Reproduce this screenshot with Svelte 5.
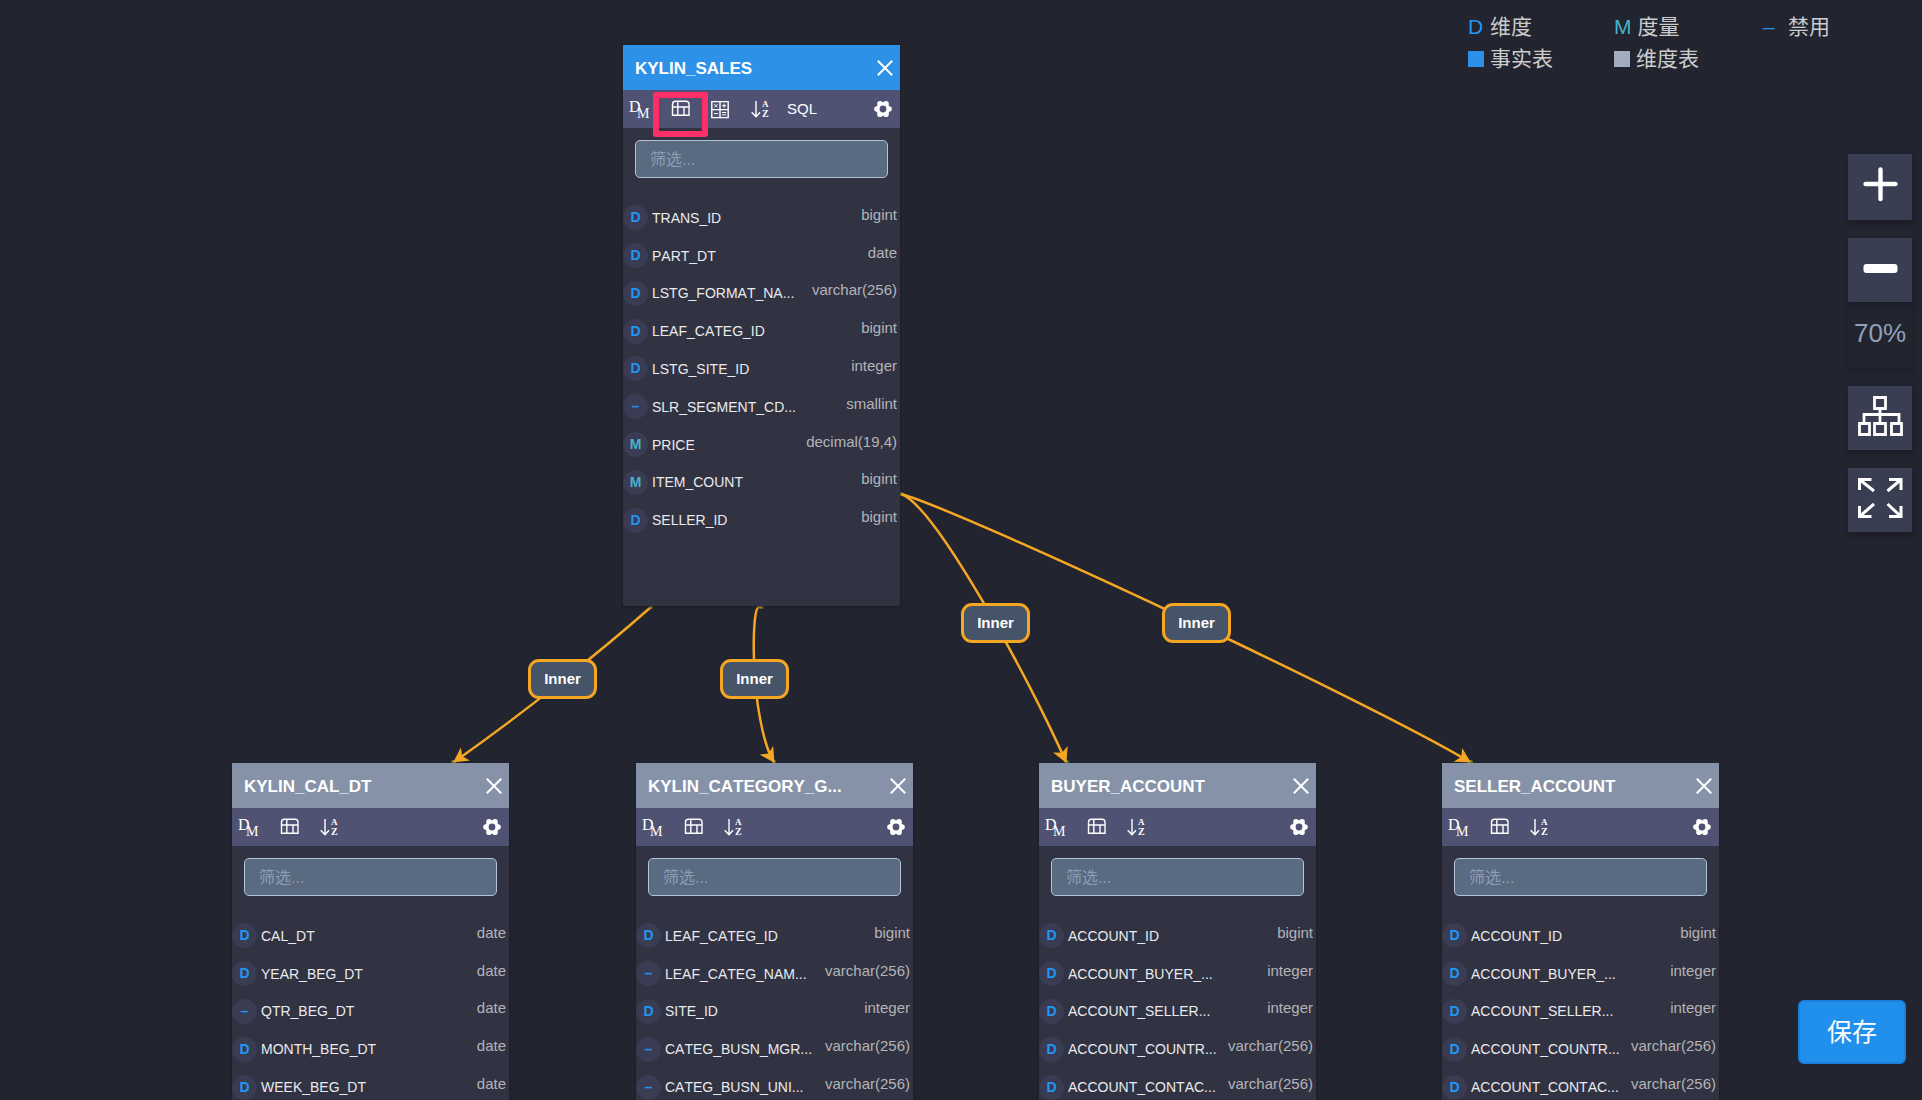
<script>
  const save = '保存';
  const legend = [
    { mark: 'D', kind: 'dimension', label: '维度' },
    { mark: 'M', kind: 'measure', label: '度量' },
    { mark: '–', kind: 'disabled', label: '禁用' },
    { mark: '', kind: 'fact', label: '事实表' },
    { mark: '', kind: 'lookup', label: '维度表' },
  ];

  const tables = [
    {
      id: 'sales', name: 'KYLIN_SALES', fact: true, x: 623, y: 45,
      columns: [
        ['D', 'TRANS_ID', 'bigint'],
        ['D', 'PART_DT', 'date'],
        ['D', 'LSTG_FORMAT_NA...', 'varchar(256)'],
        ['D', 'LEAF_CATEG_ID', 'bigint'],
        ['D', 'LSTG_SITE_ID', 'integer'],
        ['–', 'SLR_SEGMENT_CD...', 'smallint'],
        ['M', 'PRICE', 'decimal(19,4)'],
        ['M', 'ITEM_COUNT', 'bigint'],
        ['D', 'SELLER_ID', 'bigint'],
      ],
    },
    {
      id: 'cal', name: 'KYLIN_CAL_DT', fact: false, x: 232, y: 763,
      columns: [
        ['D', 'CAL_DT', 'date'],
        ['D', 'YEAR_BEG_DT', 'date'],
        ['–', 'QTR_BEG_DT', 'date'],
        ['D', 'MONTH_BEG_DT', 'date'],
        ['D', 'WEEK_BEG_DT', 'date'],
      ],
    },
    {
      id: 'category', name: 'KYLIN_CATEGORY_G...', fact: false, x: 636, y: 763,
      columns: [
        ['D', 'LEAF_CATEG_ID', 'bigint'],
        ['–', 'LEAF_CATEG_NAM...', 'varchar(256)'],
        ['D', 'SITE_ID', 'integer'],
        ['–', 'CATEG_BUSN_MGR...', 'varchar(256)'],
        ['–', 'CATEG_BUSN_UNI...', 'varchar(256)'],
      ],
    },
    {
      id: 'buyer', name: 'BUYER_ACCOUNT', fact: false, x: 1039, y: 763,
      columns: [
        ['D', 'ACCOUNT_ID', 'bigint'],
        ['D', 'ACCOUNT_BUYER_...', 'integer'],
        ['D', 'ACCOUNT_SELLER...', 'integer'],
        ['D', 'ACCOUNT_COUNTR...', 'varchar(256)'],
        ['D', 'ACCOUNT_CONTAC...', 'varchar(256)'],
      ],
    },
    {
      id: 'seller', name: 'SELLER_ACCOUNT', fact: false, x: 1442, y: 763,
      columns: [
        ['D', 'ACCOUNT_ID', 'bigint'],
        ['D', 'ACCOUNT_BUYER_...', 'integer'],
        ['D', 'ACCOUNT_SELLER...', 'integer'],
        ['D', 'ACCOUNT_COUNTR...', 'varchar(256)'],
        ['D', 'ACCOUNT_CONTAC...', 'varchar(256)'],
      ],
    },
  ];

  const joins = [
    { label: 'Inner', x: 528, y: 659, path: 'M651 607 C600 652 525 712 454 762' },
    { label: 'Inner', x: 720, y: 659, path: 'M762 607 H759 C755 607 753 630 754 660 C755 700 763 745 774 762' },
    { label: 'Inner', x: 961, y: 603, path: 'M901 494 C935 505 1030 680 1066 762' },
    { label: 'Inner', x: 1162, y: 603, path: 'M901 494 C960 510 1370 702 1470 762' },
  ];

  const ports = [
    [651, 607], [762, 607], [901, 494], [453, 762], [774, 762], [1067, 762], [1471, 762],
  ];

  // Centres of the six lobes of the gear icon.
  const lobes = [[16, 10], [13, 15.2], [7, 15.2], [4, 10], [7, 4.8], [13, 4.8]];

  const kinds = { D: 'dimension', M: 'measure', '–': 'disabled' };
</script>

<main class="canvas">
  <svg class="links" aria-hidden="true">
    <defs>
      <marker id="arrow" markerUnits="userSpaceOnUse" markerWidth="16" markerHeight="16" refX="14" refY="8" orient="auto">
        <path d="M0 0L15 8L0 16L4 8z" />
      </marker>
    </defs>
    {#each ports as [cx, cy]}
      <circle {cx} {cy} r="2" />
    {/each}
    {#each joins as join}
      <path class="link" d={join.path} marker-end="url(#arrow)" />
    {/each}
  </svg>

  {#each joins as join}
    <button class="join" style="left: {join.x}px; top: {join.y}px">{join.label}</button>
  {/each}

  {#each tables as table}
    <section class="card" class:fact={table.fact} style="left: {table.x}px; top: {table.y}px">
      <header>
        <h2>{table.name}</h2>
        <button class="close" aria-label="关闭">
          <svg width="16" height="16" viewBox="0 0 16 16" aria-hidden="true"><path d="M0.8 0.8L15.2 15.2M15.2 0.8L0.8 15.2" /></svg>
        </button>
      </header>
      <div class="tools">
        <button aria-label="维度度量">
          <svg width="26" height="28" viewBox="-3 -4 26 28" aria-hidden="true">
            <text x="-1" y="13" font-size="16">D</text>
            <text x="7" y="19" font-size="14">M</text>
          </svg>
        </button>
        <button class:marked={table.fact} aria-label="表">
          <svg width="20" height="20" viewBox="0 0 20 20" aria-hidden="true">
            <path d="M2.500 16.300V5.200a3 3 0 0 1 3-3h10.500a3 3 0 0 1 3 3v11.100zM2.500 8h16.500M7.800 2.200v14.100M14 8v8.300" />
          </svg>
        </button>
        {#if table.fact}
          <button aria-label="计算列">
            <svg width="20" height="20" viewBox="0 0 20 20" aria-hidden="true">
              <path d="M1.8 2.6h16.4v16H1.8zM10 2.6v16M1.8 10.6h16.4" />
              <path class="thin" d="M4.4 5.2l3 3M7.4 5.2l-3 3M14.1 4.6v4.2M12 6.7h4.2M4 14.6h4M12 13.5h4.2M12 15.8h4.2" />
            </svg>
          </button>
        {/if}
        <button aria-label="排序">
          <svg width="20" height="24" viewBox="0 -2 20 24" aria-hidden="true">
            <path d="M6 2v15.600M1.700 13.200l4.300 4.600 4-4.600" />
            <text class="strong" x="12" y="8" font-size="9">A</text>
            <text class="strong" x="12" y="18" font-size="10">Z</text>
          </svg>
        </button>
        {#if table.fact}<button class="sql">SQL</button>{/if}
        <button class="gear" aria-label="设置">
          <svg width="20" height="20" viewBox="0 0 20 20" aria-hidden="true">
            <circle cx="10" cy="10" r="6.800" />
            {#each lobes as [cx, cy]}
              <circle {cx} {cy} r="2.800" />
            {/each}
            <circle class="hole" cx="10" cy="10" r="3.400" />
          </svg>
        </button>
      </div>
      <input class="filter" type="text" placeholder="筛选..." aria-label="筛选 {table.name}" />
      <ul>
        {#each table.columns as [mark, name, type]}
          <li>
            <span class="badge {kinds[mark]}">{mark}</span>
            <span class="name">{name}</span>
            <span class="type">{type}</span>
          </li>
        {/each}
      </ul>
    </section>
  {/each}

  <ul class="legend">
    {#each legend as item}
      <li><span class="mark {item.kind}">{item.mark}</span>{item.label}</li>
    {/each}
  </ul>

  <nav class="zoom" aria-label="缩放">
    <button class="plus" aria-label="放大">
      <svg width="46" height="46" viewBox="0 0 46 46" aria-hidden="true"><path d="M8.500 20h30M23.500 5.500v29.500" stroke-width="4.400" stroke-linecap="round" /></svg>
    </button>
    <div class="minus">
      <button aria-label="缩小">
        <svg width="46" height="46" viewBox="0 0 46 46" aria-hidden="true"><rect x="6.500" y="17" width="34" height="9" rx="3" /></svg>
      </button>
      <output>70%</output>
    </div>
    <button aria-label="自动布局">
      <svg width="46" height="46" viewBox="0 0 46 46" aria-hidden="true">
        <path d="M17.500 2.500h11v11h-11zM2.500 28.500h10v11h-10zM17.500 28.500h11v11h-11zM34.500 28.500h10v11h-10zM23 13.500v15M7 28.500V19.500h35v9" stroke-width="2.800" />
      </svg>
    </button>
    <button aria-label="全屏">
      <svg width="46" height="46" viewBox="0 0 46 46" aria-hidden="true">
        <path d="M2.500 13V2.500h12M2.500 2.500L17 14M32 2.500h12V13M44 2.500L30.500 14M2.500 29v10.500h12M2.500 39.500L17 27M32 39.500h12V29M44 39.500L30.500 27" stroke-width="3" />
      </svg>
    </button>
  </nav>

  <button class="save">{save}</button>
</main>

<style>
  :global(body) {
    background: #22242f;
  }
  .canvas {
    position: relative;
    height: 100vh;
    overflow: hidden;
    font-family: "Liberation Sans", "Noto Sans CJK SC", sans-serif;
    font-kerning: none;
    color: #fff;
  }
  button {
    display: flex;
    align-items: center;
    justify-content: center;
    padding: 0;
    border: 0;
    background: none;
    color: #fff;
    font: inherit;
    cursor: pointer;
  }
  ul {
    margin: 0;
    padding: 0;
    list-style: none;
  }

  .links {
    position: absolute;
    inset: 0;
    width: 100%;
    height: 100%;
  }
  .links circle {
    fill: #4f8a2c;
  }
  .links marker path {
    fill: #f5a623;
  }
  .link {
    fill: none;
    stroke: #f5a623;
    stroke-width: 2.500;
  }
  .join {
    position: absolute;
    box-sizing: border-box;
    width: 69px;
    height: 40px;
    border: 3px solid #f5a623;
    border-radius: 11px;
    background: #455468;
    font-size: 15px;
    font-weight: bold;
    line-height: 20px;
  }

  .card {
    position: absolute;
    display: flex;
    flex-direction: column;
    width: 277px;
    height: 561px;
    border-radius: 0 0 2px 2px;
    background: #313342;
    box-shadow: 0 1px 3px #1a1b24;
  }
  header {
    display: flex;
    align-items: center;
    justify-content: space-between;
    height: 45px;
    padding: 0 7px 0 12px;
    background: #8592a8;
  }
  .fact header {
    background: #2e91e8;
  }
  h2 {
    margin: 0;
    padding-top: 3px;
    font-size: 17px;
    line-height: 20px;
  }
  .close path {
    stroke: #fff;
    stroke-width: 2;
  }
  .tools {
    display: flex;
    height: 38px;
    background: #505273;
  }
  .tools button {
    width: 34px;
    margin-right: 6px;
  }
  .tools .sql {
    width: 38px;
    padding-bottom: 2px;
    font-size: 15px;
  }
  .tools .gear {
    margin: 0 0 0 auto;
  }
  .tools path {
    fill: none;
    stroke: #fff;
    stroke-width: 1.400;
  }
  .tools .thin {
    stroke-width: 1;
  }
  .tools text {
    fill: #fff;
    font-family: "Liberation Serif", serif;
  }
  .tools .strong {
    font-weight: bold;
  }
  .gear circle {
    fill: #fff;
  }
  .gear .hole {
    fill: #505273;
  }
  .tools .marked {
    position: relative;
  }
  .marked::after {
    content: "";
    position: absolute;
    top: 2px;
    left: -10px;
    box-sizing: border-box;
    width: 55px;
    height: 45px;
    border: 6px solid #fd2f68;
    border-radius: 3px;
  }
  .filter {
    box-sizing: border-box;
    height: 38px;
    margin: 12px 12px 21px;
    padding: 2px 14px 0;
    border: 1px solid #b3c3da;
    border-radius: 5px;
    background: #5a6a80;
    color: #fff;
    font: 16px "Liberation Sans", "Noto Sans CJK SC", sans-serif;
  }
  .filter::placeholder {
    color: #8d9db5;
    opacity: 1;
  }
  .card ul {
    display: grid;
    height: 189px;
    grid-auto-rows: 1fr;
  }
  .fact ul {
    height: 340px;
  }
  .card li {
    display: flex;
    align-items: center;
    padding-right: 3px;
  }
  .badge {
    width: 25px;
    margin-right: 4px;
    border-radius: 50%;
    background: #393c52;
    font-size: 14px;
    font-weight: bold;
    line-height: 25px;
    text-align: center;
  }
  .dimension,
  .disabled {
    color: #2196f3;
  }
  .measure {
    color: #46b3cb;
  }
  .name {
    color: #eaeaee;
    font-size: 14px;
  }
  .type {
    margin-left: auto;
    padding-bottom: 7px;
    color: #b4b4b8;
    font-size: 15px;
  }

  .legend {
    position: absolute;
    top: 11px;
    right: 59px;
    display: grid;
    grid-template-columns: 146px 149px 100px;
    color: #ccc;
    font-size: 21px;
    line-height: 32px;
  }
  .legend li {
    display: flex;
    align-items: center;
    gap: 6px;
  }
  .mark {
    min-width: 16px;
  }
  .mark.disabled {
    min-width: 19px;
  }
  .mark.fact,
  .mark.lookup {
    height: 16px;
    background: #2e91e8;
  }
  .mark.lookup {
    background: #a0aec0;
  }

  .zoom {
    position: absolute;
    top: 154px;
    right: 10px;
    display: flex;
    flex-direction: column;
    gap: 18px;
    width: 64px;
  }
  .zoom button {
    width: 64px;
    height: 64px;
    background: #3a3e53;
    box-shadow: 1px 3px 4px #1b1c25;
  }
  .zoom .plus {
    height: 66px;
  }
  .zoom path {
    fill: none;
    stroke: #fff;
  }
  .zoom rect {
    fill: #fff;
  }
  output {
    display: block;
    height: 66px;
    box-shadow: 1px 3px 4px #1d1e28;
    color: #8fa1bb;
    font-size: 26px;
    line-height: 62px;
    text-align: center;
  }
  .save {
    position: absolute;
    right: 16px;
    bottom: 36px;
    width: 108px;
    height: 64px;
    padding-bottom: 4px;
    border: 2px solid #1d7fdc;
    border-radius: 6px;
    background: #218fec;
    font-size: 25px;
  }
</style>
